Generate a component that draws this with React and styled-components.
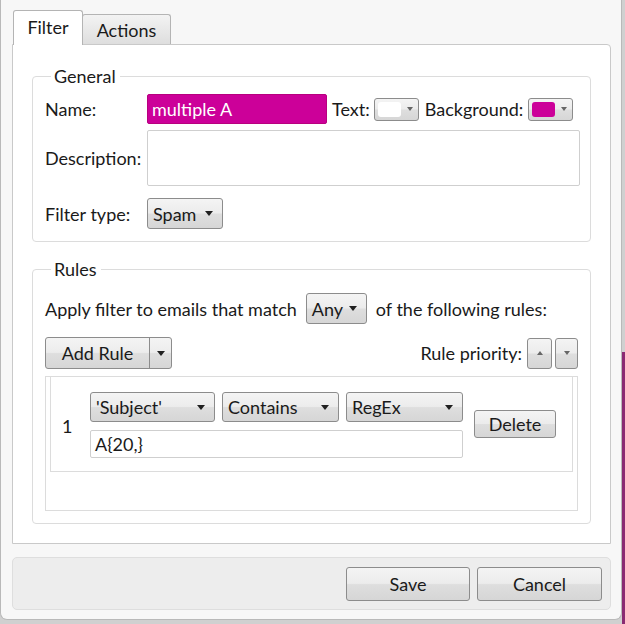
import React from 'react'
import styled, { createGlobalStyle, css } from 'styled-components'

const GlobalStyle = createGlobalStyle`
  html, body {
    margin: 0;
    padding: 0;
    background: #d0d0d0;
  }
  body {
    font-family: 'Lato', 'Liberation Sans', sans-serif;
    font-size: 18px;
    color: #1a1a1a;
  }
`

const Screen = styled.div`
  width: 625px;
  height: 624px;
  overflow: hidden;
  background: linear-gradient(#8a2a72, #8a2a72) right 352px / 3px 272px no-repeat, #d0d0d0;
`

const Window = styled.div`
  width: 622px;
  height: 620px;
  box-sizing: border-box;
  background: #f7f7f7;
  border: 1px solid #b9b9b9;
  border-top: none;
  border-radius: 0 0 7px 7px;
  padding: 10px 10px 9px 11px;
  display: flex;
  flex-direction: column;
`

const TabStrip = styled.div`
  display: flex;
  align-items: flex-end;
  height: 34px;
  padding-left: 1px;
  position: relative;
  z-index: 1;
`

const Tab = styled.div`
  box-sizing: border-box;
  border: 1px solid #b4b4b4;
  border-bottom: none;
  border-radius: 3px 3px 0 0;
  display: flex;
  align-items: center;
  justify-content: center;
  ${({ $active }) =>
    $active
      ? css`
          width: 70px;
          height: 35px;
          margin-bottom: -1px;
          background: #ffffff;
          padding-bottom: 3px;
        `
      : css`
          width: 89px;
          height: 30px;
          margin-left: -1px;
          background: linear-gradient(#f3f3f3, #dedede);
          padding-top: 1px;
        `}
`

const Panel = styled.div`
  height: 503px;
  box-sizing: border-box;
  background: #ffffff;
  border: 1px solid #c9c9c9;
  border-radius: 0 4px 0 0;
  padding: 20px 19px 0 19px;
  display: flex;
  flex-direction: column;
  gap: 16px;
`

const Group = styled.fieldset`
  margin: 0;
  border: 1px solid #dcdcdc;
  border-radius: 4px;
  padding: ${({ $pad }) => $pad};
  height: ${({ $h }) => $h}px;
  box-sizing: border-box;
  min-inline-size: 0;
`

const Legend = styled.legend`
  padding: 0 4px 0 3px;
  margin-left: 6px;
  line-height: 22px;
`

const Row = styled.div`
  display: flex;
  align-items: center;
  gap: ${({ $gap }) => $gap || 0}px;
  margin-top: ${({ $mt }) => $mt || 0}px;
`

const Label = styled.span`
  width: ${({ $w }) => ($w ? `${$w}px` : 'auto')};
  margin: 0 ${({ $mr }) => $mr || 0}px 0 ${({ $ml }) => $ml || 0}px;
  flex: none;
  white-space: nowrap;
`

const TextInput = styled.div`
  box-sizing: border-box;
  width: ${({ $w }) => $w}px;
  height: ${({ $h }) => $h}px;
  border: 1px solid ${({ $fill }) => ($fill ? '#b8007f' : '#cfcfcf')};
  background: ${({ $fill }) => $fill || '#ffffff'};
  color: ${({ $fill }) => ($fill ? '#ffffff' : '#1a1a1a')};
  border-radius: 2px;
  padding: 0 4px;
  display: flex;
  align-items: center;
  flex: none;
`

const buttonFace = css`
  box-sizing: border-box;
  border: 1px solid #8c8c8c;
  border-radius: 3px;
  background: linear-gradient(#f4f4f4 0%, #ececec 48%, #dedede 52%, #d6d6d6 100%);
  display: flex;
  align-items: center;
  flex: none;
`

const Combo = styled.div`
  ${buttonFace}
  width: ${({ $w }) => $w}px;
  height: ${({ $h }) => $h || 31}px;
  margin: 0 ${({ $mx }) => $mx || 0}px;
  padding: 0 9px 0 5px;
  justify-content: space-between;
`

const Arrow = styled.span`
  width: 0;
  height: 0;
  border-left: ${({ $s }) => $s || 4}px solid transparent;
  border-right: ${({ $s }) => $s || 4}px solid transparent;
  border-top: ${({ $s }) => ($s || 4) + 1}px solid ${({ $light }) => ($light ? '#666' : '#202020')};
  transform: ${({ $up }) => ($up ? 'rotate(180deg)' : 'none')};
`

const ColorCombo = styled.div`
  ${buttonFace}
  width: 45px;
  height: 23px;
  padding: 0 5px 0 3px;
  justify-content: space-between;
`

const Swatch = styled.span`
  width: 23px;
  height: 15px;
  border-radius: 3px;
  background: ${({ $c }) => $c};
`

const Button = styled.div`
  ${buttonFace}
  width: ${({ $w }) => $w}px;
  height: ${({ $h }) => $h}px;
  margin-left: ${({ $ml }) => $ml || 0}px;
  justify-content: center;
`

const SplitButton = styled.div`
  ${buttonFace}
  width: 127px;
  height: 32px;
  overflow: hidden;
`

const SplitMain = styled.span`
  width: 103px;
  height: 100%;
  display: flex;
  align-items: center;
  justify-content: center;
  border-right: 1px solid #8c8c8c;
`

const SplitArrow = styled.span`
  flex: 1;
  display: flex;
  align-items: center;
  justify-content: center;
`

const Spacer = styled.span`
  flex: 1;
`

const ListBox = styled.div`
  margin-top: 7px;
  height: 135px;
  box-sizing: border-box;
  border: 1px solid #dcdcdc;
  background: #fff;
  padding: 0 4px;
`

const RuleItem = styled.div`
  height: 95px;
  box-sizing: border-box;
  border: 1px solid #dcdcdc;
  border-top: none;
  display: flex;
  align-items: center;
  padding: 0 16px 0 11px;
`

const RuleNumber = styled.span`
  width: 28px;
  margin-top: 4px;
`

const RuleFields = styled.div`
  display: flex;
  flex-direction: column;
  gap: 8px;
  margin-top: 2px;
`

const Footer = styled.div`
  margin-top: 13px;
  height: 53px;
  box-sizing: border-box;
  background: #ededed;
  border: 1px solid #dedede;
  border-radius: 5px;
  display: flex;
  align-items: center;
  justify-content: flex-end;
  gap: 7px;
  padding: 0 8px 0 0;
`

export default function App() {
  return (
    <Screen>
      <GlobalStyle />
      <Window>
        <TabStrip>
          <Tab $active>Filter</Tab>
          <Tab>Actions</Tab>
        </TabStrip>
        <Panel>
          <Group $h={177} $pad="0 12px 0 12px">
            <Legend>General</Legend>
            <Row $mt={7}>
              <Label $w={102}>Name:</Label>
              <TextInput $w={180} $h={30} $fill="#cc0099">multiple A</TextInput>
              <Label $ml={5} $mr={4}>Text:</Label>
              <ColorCombo>
                <Swatch $c="#ffffff" />
                <Arrow $s={3} $light />
              </ColorCombo>
              <Label $ml={6} $mr={5}>Background:</Label>
              <ColorCombo>
                <Swatch $c="#cc0099" />
                <Arrow $s={3} $light />
              </ColorCombo>
            </Row>
            <Row $mt={6}>
              <Label $w={102}>Description:</Label>
              <TextInput $w={433} $h={56} />
            </Row>
            <Row $mt={12}>
              <Label $w={102}>Filter type:</Label>
              <Combo $w={76}>
                Spam
                <Arrow />
              </Combo>
            </Row>
          </Group>
          <Group $h={266} $pad="0 12px 0 12px">
            <Legend>Rules</Legend>
            <Row $mt={13}>
              <Label>Apply filter to emails that match</Label>
              <Combo $w={61} $mx={9}>
                Any
                <Arrow />
              </Combo>
              <Label>of the following rules:</Label>
            </Row>
            <Row $mt={13}>
              <SplitButton>
                <SplitMain>Add Rule</SplitMain>
                <SplitArrow>
                  <Arrow />
                </SplitArrow>
              </SplitButton>
              <Spacer />
              <Label $mr={5}>Rule priority:</Label>
              <Button $w={25} $h={31}>
                <Arrow $s={3} $light $up />
              </Button>
              <Button $w={23} $h={31} $ml={3}>
                <Arrow $s={3} $light />
              </Button>
            </Row>
            <ListBox>
              <RuleItem>
                <RuleNumber>1</RuleNumber>
                <RuleFields>
                  <Row $gap={7}>
                    <Combo $w={125} $h={30}>
                      'Subject'
                      <Arrow />
                    </Combo>
                    <Combo $w={117} $h={30}>
                      Contains
                      <Arrow />
                    </Combo>
                    <Combo $w={117} $h={30}>
                      RegEx
                      <Arrow />
                    </Combo>
                  </Row>
                  <TextInput $w={373} $h={28}>A{'{'}20,{'}'}</TextInput>
                </RuleFields>
                <Spacer />
                <Button $w={82} $h={28}>Delete</Button>
              </RuleItem>
            </ListBox>
          </Group>
        </Panel>
        <Footer>
          <Button $w={124} $h={34}>Save</Button>
          <Button $w={125} $h={34}>Cancel</Button>
        </Footer>
      </Window>
    </Screen>
  )
}
